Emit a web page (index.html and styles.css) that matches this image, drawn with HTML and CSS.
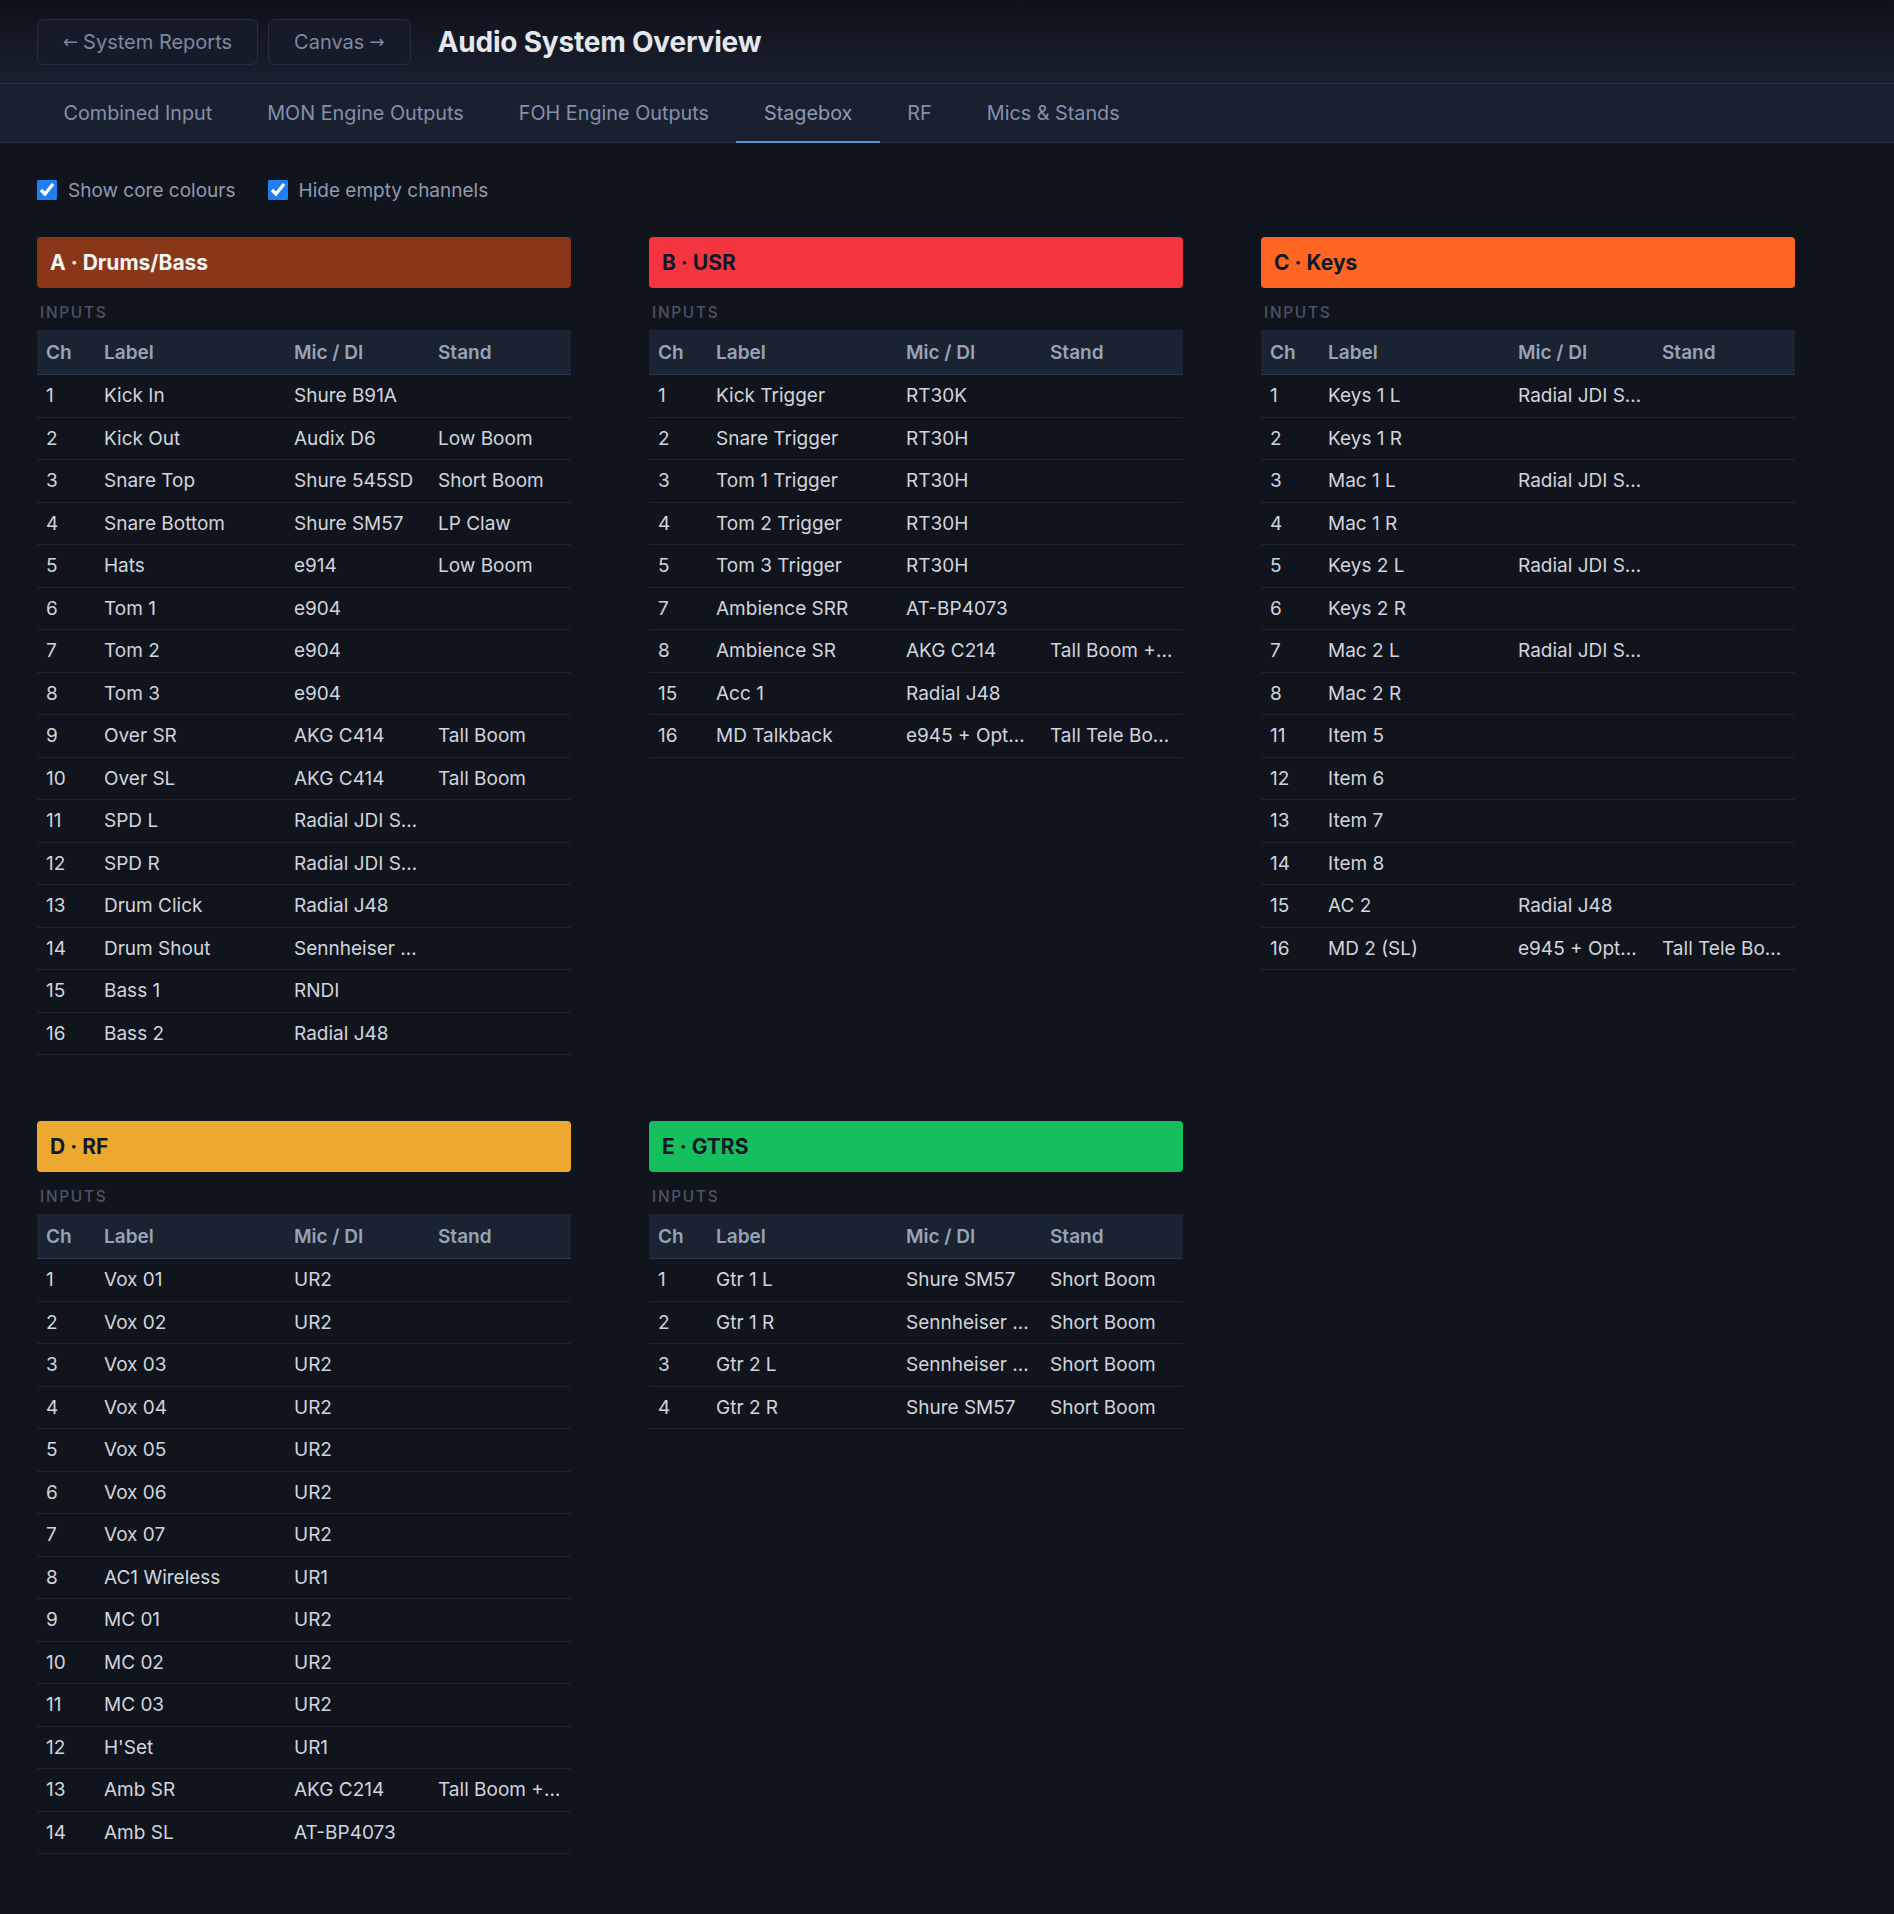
FILE: index.html
```html
<!DOCTYPE html>
<html lang="en">
<head>
  <meta charset="UTF-8">
  <meta name="viewport" content="width=device-width, initial-scale=1.0">
  <title>Audio System Overview</title>
  <link rel="stylesheet" href="styles.css">
</head>
<body>
  <header class="topbar">
    <a class="nav-btn" href="#"><span class="arrow">&larr;</span> System Reports</a>
    <a class="nav-btn" href="#">Canvas <span class="arrow">&rarr;</span></a>
    <h1>Audio System Overview</h1>
  </header>
  <nav class="tabs">
    <a class="tab" href="#">Combined Input</a>
    <a class="tab" href="#">MON Engine Outputs</a>
    <a class="tab" href="#">FOH Engine Outputs</a>
    <a class="tab active" href="#">Stagebox</a>
    <a class="tab" href="#">RF</a>
    <a class="tab" href="#">Mics &amp; Stands</a>
  </nav>

  <main class="content">
    <div class="options">
      <label><input type="checkbox" checked> Show core colours</label>
      <label><input type="checkbox" checked> Hide empty channels</label>
    </div>

    <div class="boxes">
      <section class="box">
        <div class="box-head core-a">A · Drums/Bass</div>
        <div class="box-sub">Inputs</div>
        <table>
          <colgroup><col class="c-ch"><col class="c-label"><col class="c-mic"><col class="c-stand"></colgroup>
          <thead><tr><th>Ch</th><th>Label</th><th>Mic / DI</th><th>Stand</th></tr></thead>
          <tbody>
            <tr><td>1</td><td>Kick In</td><td>Shure B91A</td><td></td></tr>
            <tr><td>2</td><td>Kick Out</td><td>Audix D6</td><td>Low Boom</td></tr>
            <tr><td>3</td><td>Snare Top</td><td>Shure 545SD</td><td>Short Boom</td></tr>
            <tr><td>4</td><td>Snare Bottom</td><td>Shure SM57</td><td>LP Claw</td></tr>
            <tr><td>5</td><td>Hats</td><td>e914</td><td>Low Boom</td></tr>
            <tr><td>6</td><td>Tom 1</td><td>e904</td><td></td></tr>
            <tr><td>7</td><td>Tom 2</td><td>e904</td><td></td></tr>
            <tr><td>8</td><td>Tom 3</td><td>e904</td><td></td></tr>
            <tr><td>9</td><td>Over SR</td><td>AKG C414</td><td>Tall Boom</td></tr>
            <tr><td>10</td><td>Over SL</td><td>AKG C414</td><td>Tall Boom</td></tr>
            <tr><td>11</td><td>SPD L</td><td>Radial JDI Stereo</td><td></td></tr>
            <tr><td>12</td><td>SPD R</td><td>Radial JDI Stereo</td><td></td></tr>
            <tr><td>13</td><td>Drum Click</td><td>Radial J48</td><td></td></tr>
            <tr><td>14</td><td>Drum Shout</td><td>Sennheiser MD421</td><td></td></tr>
            <tr><td>15</td><td>Bass 1</td><td>RNDI</td><td></td></tr>
            <tr><td>16</td><td>Bass 2</td><td>Radial J48</td><td></td></tr>
          </tbody>
        </table>
      </section>

      <section class="box">
        <div class="box-head core-b">B · USR</div>
        <div class="box-sub">Inputs</div>
        <table>
          <colgroup><col class="c-ch"><col class="c-label"><col class="c-mic"><col class="c-stand"></colgroup>
          <thead><tr><th>Ch</th><th>Label</th><th>Mic / DI</th><th>Stand</th></tr></thead>
          <tbody>
            <tr><td>1</td><td>Kick Trigger</td><td>RT30K</td><td></td></tr>
            <tr><td>2</td><td>Snare Trigger</td><td>RT30H</td><td></td></tr>
            <tr><td>3</td><td>Tom 1 Trigger</td><td>RT30H</td><td></td></tr>
            <tr><td>4</td><td>Tom 2 Trigger</td><td>RT30H</td><td></td></tr>
            <tr><td>5</td><td>Tom 3 Trigger</td><td>RT30H</td><td></td></tr>
            <tr><td>7</td><td>Ambience SRR</td><td>AT-BP4073</td><td></td></tr>
            <tr><td>8</td><td>Ambience SR</td><td>AKG C214</td><td>Tall Boom + Clamp</td></tr>
            <tr><td>15</td><td>Acc 1</td><td>Radial J48</td><td></td></tr>
            <tr><td>16</td><td>MD Talkback</td><td>e945 + Optogate</td><td>Tall Tele Boom</td></tr>
          </tbody>
        </table>
      </section>

      <section class="box">
        <div class="box-head core-c">C · Keys</div>
        <div class="box-sub">Inputs</div>
        <table>
          <colgroup><col class="c-ch"><col class="c-label"><col class="c-mic"><col class="c-stand"></colgroup>
          <thead><tr><th>Ch</th><th>Label</th><th>Mic / DI</th><th>Stand</th></tr></thead>
          <tbody>
            <tr><td>1</td><td>Keys 1 L</td><td>Radial JDI Stereo</td><td></td></tr>
            <tr><td>2</td><td>Keys 1 R</td><td></td><td></td></tr>
            <tr><td>3</td><td>Mac 1 L</td><td>Radial JDI Stereo</td><td></td></tr>
            <tr><td>4</td><td>Mac 1 R</td><td></td><td></td></tr>
            <tr><td>5</td><td>Keys 2 L</td><td>Radial JDI Stereo</td><td></td></tr>
            <tr><td>6</td><td>Keys 2 R</td><td></td><td></td></tr>
            <tr><td>7</td><td>Mac 2 L</td><td>Radial JDI Stereo</td><td></td></tr>
            <tr><td>8</td><td>Mac 2 R</td><td></td><td></td></tr>
            <tr><td>11</td><td>Item 5</td><td></td><td></td></tr>
            <tr><td>12</td><td>Item 6</td><td></td><td></td></tr>
            <tr><td>13</td><td>Item 7</td><td></td><td></td></tr>
            <tr><td>14</td><td>Item 8</td><td></td><td></td></tr>
            <tr><td>15</td><td>AC 2</td><td>Radial J48</td><td></td></tr>
            <tr><td>16</td><td>MD 2 (SL)</td><td>e945 + Optogate</td><td>Tall Tele Boom</td></tr>
          </tbody>
        </table>
      </section>

      <section class="box">
        <div class="box-head core-d">D · RF</div>
        <div class="box-sub">Inputs</div>
        <table>
          <colgroup><col class="c-ch"><col class="c-label"><col class="c-mic"><col class="c-stand"></colgroup>
          <thead><tr><th>Ch</th><th>Label</th><th>Mic / DI</th><th>Stand</th></tr></thead>
          <tbody>
            <tr><td>1</td><td>Vox 01</td><td>UR2</td><td></td></tr>
            <tr><td>2</td><td>Vox 02</td><td>UR2</td><td></td></tr>
            <tr><td>3</td><td>Vox 03</td><td>UR2</td><td></td></tr>
            <tr><td>4</td><td>Vox 04</td><td>UR2</td><td></td></tr>
            <tr><td>5</td><td>Vox 05</td><td>UR2</td><td></td></tr>
            <tr><td>6</td><td>Vox 06</td><td>UR2</td><td></td></tr>
            <tr><td>7</td><td>Vox 07</td><td>UR2</td><td></td></tr>
            <tr><td>8</td><td>AC1 Wireless</td><td>UR1</td><td></td></tr>
            <tr><td>9</td><td>MC 01</td><td>UR2</td><td></td></tr>
            <tr><td>10</td><td>MC 02</td><td>UR2</td><td></td></tr>
            <tr><td>11</td><td>MC 03</td><td>UR2</td><td></td></tr>
            <tr><td>12</td><td>H'Set</td><td>UR1</td><td></td></tr>
            <tr><td>13</td><td>Amb SR</td><td>AKG C214</td><td>Tall Boom + Clamp</td></tr>
            <tr><td>14</td><td>Amb SL</td><td>AT-BP4073</td><td></td></tr>
          </tbody>
        </table>
      </section>

      <section class="box">
        <div class="box-head core-e">E · GTRS</div>
        <div class="box-sub">Inputs</div>
        <table>
          <colgroup><col class="c-ch"><col class="c-label"><col class="c-mic"><col class="c-stand"></colgroup>
          <thead><tr><th>Ch</th><th>Label</th><th>Mic / DI</th><th>Stand</th></tr></thead>
          <tbody>
            <tr><td>1</td><td>Gtr 1 L</td><td>Shure SM57</td><td>Short Boom</td></tr>
            <tr><td>2</td><td>Gtr 1 R</td><td>Sennheiser MD421</td><td>Short Boom</td></tr>
            <tr><td>3</td><td>Gtr 2 L</td><td>Sennheiser MD421</td><td>Short Boom</td></tr>
            <tr><td>4</td><td>Gtr 2 R</td><td>Shure SM57</td><td>Short Boom</td></tr>
          </tbody>
        </table>
      </section>
    </div>
  </main>
</body>
</html>
```

FILE: styles.css
```css
body { margin: 0; font-family: Inter, "Noto Sans", sans-serif; background: #10141d; color: #d1d5db; }

.topbar { display: flex; align-items: center; height: 84px; padding: 0 37px; box-sizing: border-box; background: linear-gradient(#0e1119, #1a2030); border-bottom: 1px solid #263043; }
.nav-btn { display: inline-flex; align-items: center; gap: 5px; height: 46px; padding: 0 25px; margin-right: 10px; box-sizing: border-box; border: 1px solid #252e3f; border-radius: 7px; background: #151b28; color: #7c8aa2; font-size: 20px; text-decoration: none; }
.arrow { font-family: "DejaVu Sans", sans-serif; font-size: 18px; }
.topbar h1 { margin: 0 0 0 17px; font-size: 28px; font-weight: 700; color: #e5e7eb; letter-spacing: -0.2px; }

.tabs { display: flex; height: 58px; padding: 0 36px; background: #192030; border-bottom: 1px solid #263043; }
.tab { display: flex; align-items: center; padding: 0 27.5px; color: #8392ab; font-size: 19.8px; text-decoration: none; border-bottom: 2px solid transparent; margin-bottom: -1px; }
.tab.active { border-bottom-color: #5d97d6; color: #8d9cb5; }

.content { padding: 0 37px 40px; }
.options { display: flex; gap: 32px; height: 94px; align-items: center; }
.options label { display: flex; align-items: center; gap: 11px; color: #8e9bb0; font-size: 19px; }
.options input { width: 20px; height: 20px; margin: 0; accent-color: #1f7ff2; }

.boxes { display: grid; grid-template-columns: repeat(3, 534px); column-gap: 78px; row-gap: 66px; align-items: start; }

.box-head { height: 51px; display: flex; align-items: center; padding: 0 13px; border-radius: 4px; font-size: 21px; font-weight: 700; color: #111827; }
.core-a { background: #8a3719; color: #f3f4f6; }
.core-b { background: #f43540; }
.core-c { background: #ff6624; }
.core-d { background: #eca82f; }
.core-e { background: #15bf5d; }

.box-sub { margin: 15px 0 7px 3px; font-size: 15.4px; line-height: 20px; letter-spacing: 1.7px; text-transform: uppercase; color: #4a5466; font-weight: 500; }

table { width: 100%; border-collapse: collapse; table-layout: fixed; font-size: 19px; }
.c-ch { width: 58px; }
.c-label { width: 190px; }
.c-mic { width: 144px; }
.c-stand { width: 142px; }
th { height: 44px; padding: 0 9px; text-align: left; background: #1a2332; color: #98a3b6; font-weight: 600; border-bottom: 1px solid #2b3546; }
td { height: 41.5px; padding: 0 9px; border-bottom: 1px solid #1d2533; white-space: nowrap; overflow: hidden; text-overflow: ellipsis; color: #d0d5dd; }
tbody tr:hover td { background: #131a26; }
```
